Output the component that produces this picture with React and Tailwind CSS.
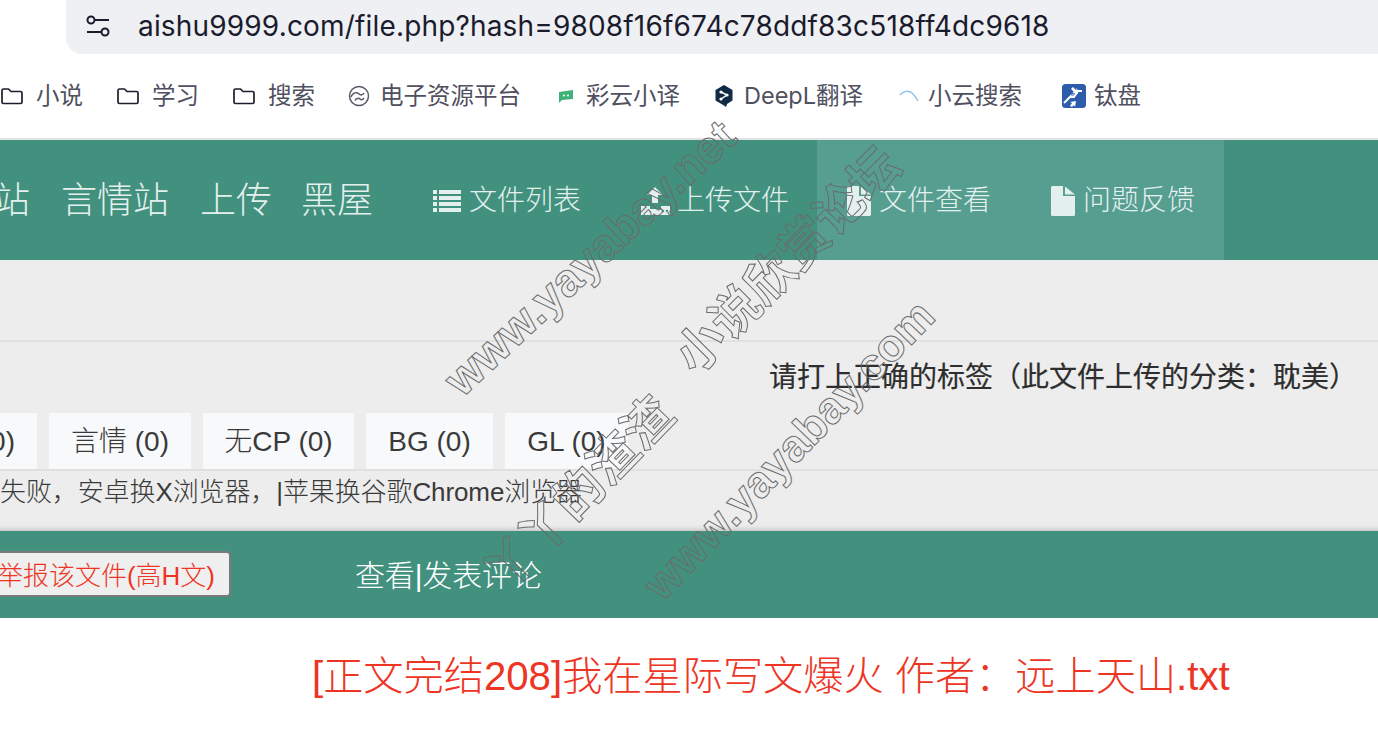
import React from "react";

const cjk = "font-['Liberation_Sans','Noto_Sans_CJK_SC',sans-serif]";
const ui = "font-['Inter','Noto_Sans_CJK_SC',sans-serif]";

const FolderIcon = () => (
  <svg width="24" height="24" viewBox="0 0 24 24" fill="none" stroke="#1d1d2e" strokeWidth="1.7" strokeLinejoin="round">
    <path d="M2 6.5a1.5 1.5 0 0 1 1.5-1.5h5l2.5 2.5h9.5A1.5 1.5 0 0 1 22 9v9a1.5 1.5 0 0 1-1.5 1.5h-17A1.5 1.5 0 0 1 2 18z" />
  </svg>
);

const ResourceIcon = () => (
  <svg width="22" height="22" viewBox="0 0 22 22" fill="none" stroke="#5a5a68" strokeWidth="1.5">
    <circle cx="11" cy="11" r="9.5" />
    <path d="M3 12c2-5 6-5 8-3 1.500 1.500 4 1 5-1M7 15.500c1-2.500 4-2.500 5-1.500s3 1 4-1" />
  </svg>
);

const CaiyunIcon = () => (
  <svg width="16" height="16" viewBox="0 0 16 16">
    <path d="M1 4l14-2v9l-11 1-3 3z" fill="#3fb377" />
    <circle cx="6" cy="7.5" r="1" fill="#fff" />
    <circle cx="10" cy="7.5" r="1" fill="#fff" />
  </svg>
);

const DeeplIcon = () => (
  <svg width="20" height="24" viewBox="0 0 20 24">
    <path d="M10 1l8.500 5v10.500L13 20l-1 3-2-1.500-8.500-5V6z" fill="#0f2b46" />
    <path d="M7 8l6 3-6 4" fill="none" stroke="#fff" strokeWidth="1.500" />
    <circle cx="7" cy="8" r="1.600" fill="#fff" />
    <circle cx="13" cy="11" r="1.600" fill="#fff" />
    <circle cx="7" cy="15" r="1.600" fill="#fff" />
  </svg>
);

const XiaoyunIcon = () => (
  <svg width="20" height="12" viewBox="0 0 20 12" fill="none" stroke="#8fc0e8" strokeWidth="1.300">
    <path d="M1 5c3-4 9-5 12-2 2 2 4 4 6 8" />
  </svg>
);

const TaipanIcon = () => (
  <svg width="24" height="24" viewBox="0 0 24 24">
    <rect width="24" height="24" rx="3.500" fill="#2c5cab" />
    <path d="M2 19l6-6h4l4-6h4" fill="none" stroke="#fff" strokeWidth="2" />
    <path d="M5 15l4-4h3" fill="none" stroke="#fff" strokeWidth="1" />
    <path d="M11 3l3 3 1-2 1 6-6-1 2-1-3-3zM8 22l2-3-2-1 6-1-1 6-1-2-2 2z" fill="#fff" />
  </svg>
);

const ListIcon = () => (
  <svg width="28" height="22" viewBox="0 0 28 22" fill="#e3f0ed">
    <rect x="0" y="0" width="4" height="4" />
    <rect x="0" y="6" width="4" height="4" />
    <rect x="0" y="12" width="4" height="4" />
    <rect x="0" y="18" width="4" height="4" />
    <rect x="6" y="0" width="22" height="4" />
    <rect x="6" y="6" width="22" height="4" />
    <rect x="6" y="12" width="22" height="4" />
    <rect x="6" y="18" width="22" height="4" />
  </svg>
);

const UploadIcon = () => (
  <svg width="29" height="28" viewBox="0 0 29 28" fill="#e3f0ed">
    <path d="M14 0l8 8h-5v8h-6V8H6z" />
    <path d="M0 19h9v3h11v-3h9v9H0z" />
    <circle cx="22" cy="24" r="1.200" fill="#42917f" />
    <circle cx="26" cy="24" r="1.200" fill="#42917f" />
  </svg>
);

const FileIcon = () => (
  <svg width="24" height="30" viewBox="0 0 24 30" fill="#e3f0ed">
    <path d="M1.500 0H12v10h12v18.500a1.500 1.500 0 0 1-1.500 1.500h-21A1.500 1.500 0 0 1 0 28.500v-27A1.500 1.500 0 0 1 1.500 0z" />
    <path d="M14 0.500l10 8h-10z" />
  </svg>
);

const bookmarks = [
  { icon: <FolderIcon />, label: "小说", ml: "ml-0", gap: "gap-[12px]" },
  { icon: <FolderIcon />, label: "学习", ml: "ml-[33px]", gap: "gap-[12px]" },
  { icon: <FolderIcon />, label: "搜索", ml: "ml-[33px]", gap: "gap-[12px]" },
  { icon: <ResourceIcon />, label: "电子资源平台", ml: "ml-[33px]", gap: "gap-[10px]" },
  { icon: <CaiyunIcon />, label: "彩云小译", ml: "ml-[37px]", gap: "gap-[12px]" },
  { icon: <DeeplIcon />, label: "DeepL翻译", ml: "ml-[34px]", gap: "gap-[10px]" },
  { icon: <XiaoyunIcon />, label: "小云搜索", ml: "ml-[36px]", gap: "gap-[9px]" },
  { icon: <TaipanIcon />, label: "钛盘", ml: "ml-[40px]", gap: "gap-[8px]" },
];

const tags = [
  { label: "0)", w: "w-[37px]", justify: "justify-end pr-[22px]" },
  { label: "言情 (0)", w: "w-[142px]", justify: "justify-center" },
  { label: "无CP (0)", w: "w-[151px]", justify: "justify-center" },
  { label: "BG (0)", w: "w-[127px]", justify: "justify-center" },
  { label: "GL (0)", w: "w-[123px]", justify: "justify-center" },
];

const marks = [
  { text: "www.yayabay.net", pos: "left-[590px] top-[258px]", size: "text-[46px]", rot: "-rotate-[43deg]" },
  { text: "小说欣赏论坛", pos: "left-[788px] top-[261px]", size: "text-[49px]", rot: "-rotate-[45deg]" },
  { text: "丫丫的渣渣", pos: "left-[580px] top-[494px]", size: "text-[49px]", rot: "-rotate-[46deg]" },
  { text: "www.yayabay.com", pos: "left-[789px] top-[450px]", size: "text-[45px]", rot: "-rotate-[46deg]" },
];

export default function App() {
  return (
    <div className={`relative w-[1378px] h-[730px] overflow-hidden bg-white ${cjk}`}>
      {/* address bar */}
      <div className="h-[54px] pl-[66px]">
        <div className="flex h-full items-center rounded-bl-[16px] bg-[#eff0f3] pb-[2px] pl-[19px]">
          <svg width="26" height="24" viewBox="0 0 26 24" fill="none" stroke="#1b1b2e" strokeWidth="2">
            <circle cx="6" cy="6" r="3.500" />
            <path d="M10 6h14M2 18h14" />
            <circle cx="20" cy="18" r="3.500" />
          </svg>
          <span className={`ml-[27px] text-[28px] tracking-[0.17px] text-[#1b1b2e] ${ui}`}>
            aishu9999.com/file.php?hash=9808f16f674c78ddf83c518ff4dc9618
          </span>
        </div>
      </div>

      {/* bookmarks */}
      <div className="flex h-[86px] items-center border-b-2 border-[#e2e2e2]">
        {bookmarks.map((b) => (
          <div key={b.label} className={`flex items-center ${b.ml} ${b.gap}`}>
            {b.icon}
            <span className={`text-[23.5px] text-[#50505f] ${ui}`}>{b.label}</span>
          </div>
        ))}
      </div>

      {/* nav */}
      <div className="flex h-[120px] bg-[#42917f] font-light text-[#e3f0ed]">
        <div className="-ml-[6px] flex items-center pt-[2px] text-[36px]">
          <span>站</span>
          <span className="ml-[31px]">言情站</span>
          <span className="ml-[31px]">上传</span>
          <span className="ml-[29px]">黑屋</span>
        </div>
        <div className="ml-[60px] flex items-center gap-[8px] pt-[2px] text-[28px]">
          <ListIcon />
          <span>文件列表</span>
        </div>
        <div className="ml-[60px] flex items-center gap-[7px] pt-[2px] text-[28px]">
          <UploadIcon />
          <span>上传文件</span>
        </div>
        <div className="ml-[28px] flex w-[407px] items-center bg-[#559e90] pl-[30px] pt-[2px] text-[28px]">
          <div className="flex items-center gap-[8px]">
            <FileIcon />
            <span>文件查看</span>
          </div>
          <div className="ml-[60px] flex items-center gap-[8px]">
            <FileIcon />
            <span>问题反馈</span>
          </div>
        </div>
      </div>

      {/* file panel */}
      <div className="h-[271px] bg-[#ededed] font-light text-[#3a3a3a]">
        <div className="h-[82px] border-b-2 border-[#e0e0e0]" />
        <div className="flex h-[71px] items-center justify-end pr-[21px] text-[28px] font-normal text-[#2e2e2e] [-webkit-text-stroke:0.2px_#2e2e2e]">
          请打上正确的标签（此文件上传的分类：耽美）
        </div>
        <div className="flex h-[56px] gap-[12px] text-[28px]">
          {tags.map((t) => (
            <div key={t.label} className={`flex items-center bg-[#f8f9fb] pt-[1px] ${t.w} ${t.justify}`}>
              <span className="whitespace-nowrap">{t.label}</span>
            </div>
          ))}
        </div>
        <div className="h-[62px] border-t-2 border-[#e0e0e0] pt-[2px] text-[26px] leading-[38px] tracking-[-0.1px] shadow-[inset_0_-6px_6px_-6px_rgba(0,0,0,0.3)]">
          失败，安卓换X浏览器，|苹果换谷歌Chrome浏览器
        </div>
      </div>

      {/* action bar */}
      <div className="flex h-[87px] items-center bg-[#42917f] pb-[1px]">
        <div className="-ml-[6px] flex h-[46px] w-[237px] items-center justify-end rounded-[4px] border-2 border-[#7a7a7a] bg-[#efefef] pr-[14px] pt-[5px] text-[26px] font-light text-[#ee3524]">
          举报该文件(高H文)
        </div>
        <div className="ml-[124px] mt-[2px] text-[30px] font-light tracking-[-0.15px] text-white">查看|发表评论</div>
      </div>

      {/* file name */}
      <div className="flex h-[112px] items-center pl-[312px] pt-[6px] text-[40.2px] font-light text-[#ee3524]">
        [正文完结208]我在星际写文爆火 作者：远上天山.txt
      </div>

      {/* watermark */}
      {marks.map((m) => (
        <div
          key={m.text}
          className={`absolute -translate-x-1/2 -translate-y-1/2 whitespace-nowrap font-bold text-transparent [-webkit-text-stroke:1px_#6b6b6b] ${m.pos} ${m.size} ${m.rot}`}
        >
          {m.text}
        </div>
      ))}
    </div>
  );
}
